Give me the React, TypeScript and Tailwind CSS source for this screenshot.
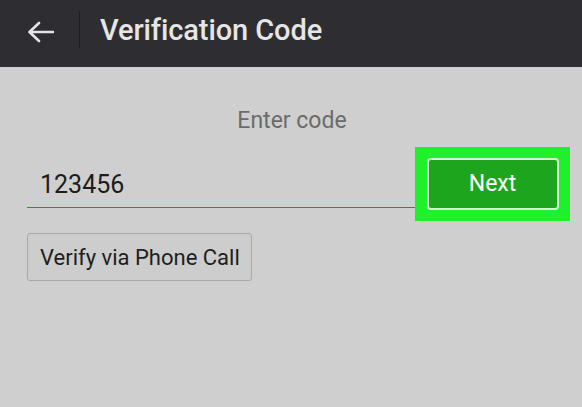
export default function App() {
  return (
    <div
      className="flex h-[407px] w-[582px] flex-col overflow-hidden bg-[#cfcfcf]"
      style={{ fontFamily: "Roboto, 'Liberation Sans', sans-serif" }}
    >
      {/* Header */}
      <header className="flex h-[67px] shrink-0 items-center bg-[#2e2e32]">
        <div className="flex w-[79px] justify-center pb-[4px] pl-[1px]">
          <svg width="27" height="22" viewBox="0 0 27 22" fill="none">
            <path
              d="M26 11H3M12 2L2.5 11L12 20"
              stroke="#e4e4e4"
              strokeWidth="2.6"
              strokeLinecap="round"
              strokeLinejoin="round"
            />
          </svg>
        </div>
        <div className="mb-[9px] h-[37px] w-px bg-[#1e1e21]" />
        <h1 className="mb-[7px] ml-[20px] text-[29px] font-medium leading-none tracking-[-0.1px] text-[#e6e6e6]">
          Verification Code
        </h1>
      </header>

      {/* Body */}
      <main className="flex flex-col pl-[27px] pr-[12px] pt-[42px]">
        <p className="pr-[13px] text-center text-[23px] leading-none text-[#6b6b6b]">
          Enter code
        </p>

        <div className="mt-[15px] flex items-start">
          <div className="flex h-[61px] flex-1 flex-col">
            <div className="flex-1 pl-[13px] pt-[25px]">
              <span className="block text-[25px] leading-none text-[#1c1c1c]">123456</span>
            </div>
            <div className="h-px bg-[#239a23]" />
          </div>
          <div className="flex h-[74px] w-[155px] items-center justify-center bg-[#20f02c]">
            <button className="flex h-[52px] w-[132px] items-center justify-center rounded-[4px] border-2 border-[#d6f5d6] bg-[#1ea51e] text-[23px] text-white">
              Next
            </button>
          </div>
        </div>

        <div className="mt-[12px] flex">
          <button className="flex h-[48px] items-center rounded-[3px] border border-[#a9a9a9] bg-[#cdcdcd] pl-[12px] pr-[11px] text-[22px] text-[#1e1e1e]">
            Verify via Phone Call
          </button>
        </div>
      </main>
    </div>
  );
}
